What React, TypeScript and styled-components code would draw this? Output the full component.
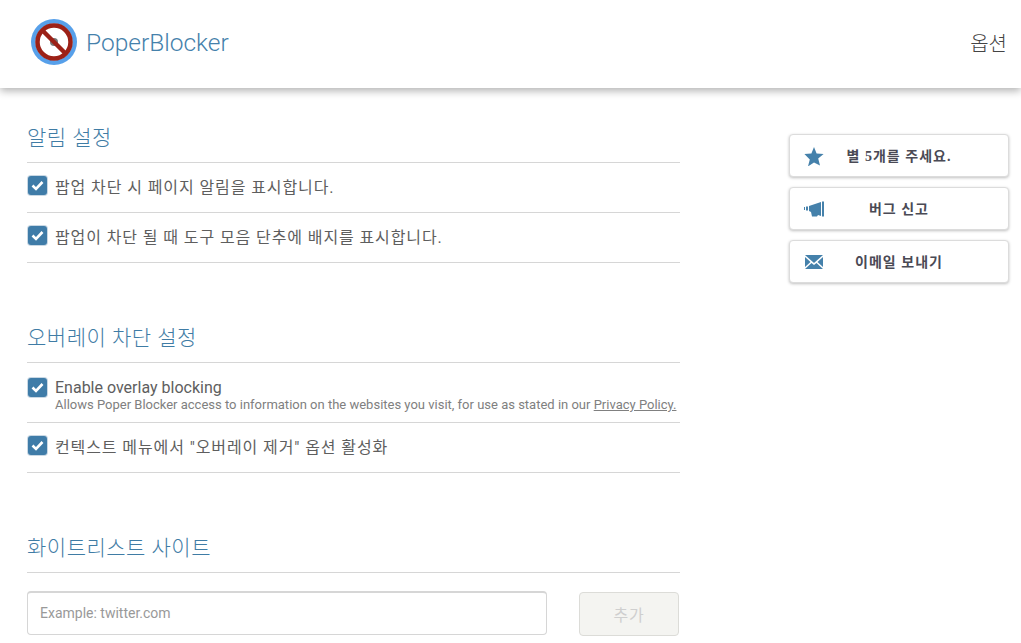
import React from "react";
import styled, { createGlobalStyle } from "styled-components";

const Global = createGlobalStyle`
  html, body { margin: 0; padding: 0; height: 643px; overflow: hidden; background: #fff; }
  body { font-family: Roboto, "Noto Sans CJK KR", sans-serif; color: #555; }
  * { box-sizing: border-box; }
`;

const Header = styled.header`
  height: 88px;
  display: flex;
  align-items: center;
  justify-content: space-between;
  padding: 0 14px 4px 31px;
  background: #fff;
  box-shadow: 0 3px 8px rgba(0,0,0,.3);
  position: relative;
`;
const Brand = styled.div`
  display: flex;
  align-items: center;
  gap: 9px;
`;
const BrandName = styled.span`
  font-size: 24.500px;
  font-weight: 300;
  color: #4581ab;
`;
const PageName = styled.span`
  font-size: 20px;
  font-weight: 300;
  color: #444;
`;
const Body = styled.div`
  display: flex;
  justify-content: space-between;
  padding: 0 12px 0 27px;
`;
const Main = styled.main`
  width: 653px;
  padding-top: 32px;
`;
const Section = styled.section`
  margin-bottom: 57px;
`;
const Title = styled.h2`
  margin: 0;
  height: 43px;
  line-height: 36px;
  font-size: 21px;
  letter-spacing: 0.5px;
  font-weight: 300;
  color: #3f7ca5;
  border-bottom: 1px solid #d6d6d6;
`;
const Row = styled.label<{ $tall?: boolean }>`
  display: flex;
  align-items: ${p => (p.$tall ? "flex-start" : "center")};
  height: ${p => (p.$tall ? 60 : 50)}px;
  padding-top: ${p => (p.$tall ? 15 : 0)}px;
  padding-bottom: ${p => (p.$tall ? 0 : 4)}px;
  gap: 8px;
  border-bottom: 1px solid #d6d6d6;
  font-size: 16px;
  color: #5e5e5e;
`;
const Box = styled.span`
  width: 19px;
  height: 19px;
  flex: none;
  margin-left: 1px;
  border-radius: 3px;
  background: #3f7ca8;
  box-shadow: 0 0 0 1px #c9d8e4;
  display: flex;
  align-items: center;
  justify-content: center;
`;
const KoText = styled.span`
  letter-spacing: 0.9px;
`;
const RowText = styled.div`
  line-height: 18px;
  margin-top: 1px;
`;
const Small = styled.div`
  font-size: 13px;
  line-height: 15px;
  color: #808080;
  white-space: nowrap;
  a { color: #808080; text-decoration: underline; }
`;
const AddRow = styled.div`
  display: flex;
  justify-content: space-between;
  padding-top: 18px;
`;
const Input = styled.input`
  width: 520px;
  height: 44px;
  border: 1px solid #d6d6d6;
  border-top: 2px solid #d6d6d6;
  border-radius: 4px;
  padding: 0 12px 2px;
  font: 14px Roboto, sans-serif;
  &::placeholder { color: #999; }
`;
const AddButton = styled.button`
  width: 100px;
  height: 44px;
  margin-top: 1px;
  margin-right: 1px;
  border: 1px solid #dcdcd8;
  border-radius: 4px;
  background: #f4f4f1;
  color: #cfcfcf;
  font: 16px "Noto Sans CJK KR", sans-serif;
  letter-spacing: 0.9px;
`;
const Side = styled.aside`
  width: 220px;
  padding-top: 46px;
  display: flex;
  flex-direction: column;
  gap: 10px;
`;
const SideButton = styled.div`
  height: 43px;
  display: flex;
  align-items: center;
  border: 1px solid #dcdcdc;
  border-radius: 4px;
  box-shadow: 0 1px 3px rgba(0,0,0,.25);
  background: #fff;
  padding: 0 34px 2px 14px;
  font: bold 14px "Liberation Serif", "Noto Sans CJK KR", serif;
  letter-spacing: 1px;
  color: #4a4a55;
`;
const SideIcon = styled.svg`
  width: 20px;
  height: 20px;
  flex: none;
  fill: #4581ab;
  margin-bottom: -2px;
`;
const SideLabel = styled.span`
  flex: 1;
  text-align: center;
`;

const Check = () => (
  <svg width="13" height="11" viewBox="0 0 13 11">
    <path d="M1.5 5.5 L5 9 L11.5 2" fill="none" stroke="#fff" strokeWidth="2.6" />
  </svg>
);

const Logo = () => (
  <svg width="46" height="46" viewBox="0 0 46 46">
    <circle cx="23" cy="23" r="23" fill="#57a0ea" />
    <circle cx="23" cy="23" r="18.5" fill="#fff" />
    <circle cx="23" cy="23" r="4" fill="#777" />
    <circle cx="23" cy="23" r="16.5" fill="none" stroke="#9c2117" strokeWidth="4.5" />
    <path d="M11 11 L35 35" stroke="#9c2117" strokeWidth="4.5" />
  </svg>
);

export default function App() {
  return (
    <>
      <Global />
      <Header>
        <Brand>
          <Logo />
          <BrandName>PoperBlocker</BrandName>
        </Brand>
        <PageName>옵션</PageName>
      </Header>
      <Body>
        <Main>
          <Section>
            <Title>알림 설정</Title>
            <Row><Box><Check /></Box><KoText>팝업 차단 시 페이지 알림을 표시합니다.</KoText></Row>
            <Row><Box><Check /></Box><KoText>팝업이 차단 될 때 도구 모음 단추에 배지를 표시합니다.</KoText></Row>
          </Section>
          <Section>
            <Title>오버레이 차단 설정</Title>
            <Row $tall>
              <Box><Check /></Box>
              <RowText>
                Enable overlay blocking
                <Small>Allows Poper Blocker access to information on the websites you visit, for use as stated in our <a href="#">Privacy Policy.</a></Small>
              </RowText>
            </Row>
            <Row><Box><Check /></Box><KoText>컨텍스트 메뉴에서 "오버레이 제거" 옵션 활성화</KoText></Row>
          </Section>
          <section>
            <Title>화이트리스트 사이트</Title>
            <AddRow>
              <Input placeholder="Example: twitter.com" />
              <AddButton>추가</AddButton>
            </AddRow>
          </section>
        </Main>
        <Side>
          <SideButton>
            <SideIcon viewBox="0 0 20 20"><path d="M10 1l2.6 6.6 7 .4-5.4 4.5 1.8 6.9L10 16.6 4 20.4l1.8-6.9L.4 8l7-.4z" /></SideIcon>
            <SideLabel>별 5개를 주세요.</SideLabel>
          </SideButton>
          <SideButton>
            <SideIcon viewBox="0 0 20 20"><path d="M0 8h1v3H0zM2 7.5h2v4H2zM5 7l12-4v14l-3-1-1 1.5H8L7 13l-2-1zM18 2.500h2v15h-2z" /></SideIcon>
            <SideLabel>버그 신고</SideLabel>
          </SideButton>
          <SideButton>
            <SideIcon viewBox="0 0 20 20"><path d="M1 3h18L10 11zM1 5l5.500 5L1 15zM19 5v10l-5.500-5zM7.500 11L10 13l2.500-2L19 17H1z" /></SideIcon>
            <SideLabel>이메일 보내기</SideLabel>
          </SideButton>
        </Side>
      </Body>
    </>
  );
}
